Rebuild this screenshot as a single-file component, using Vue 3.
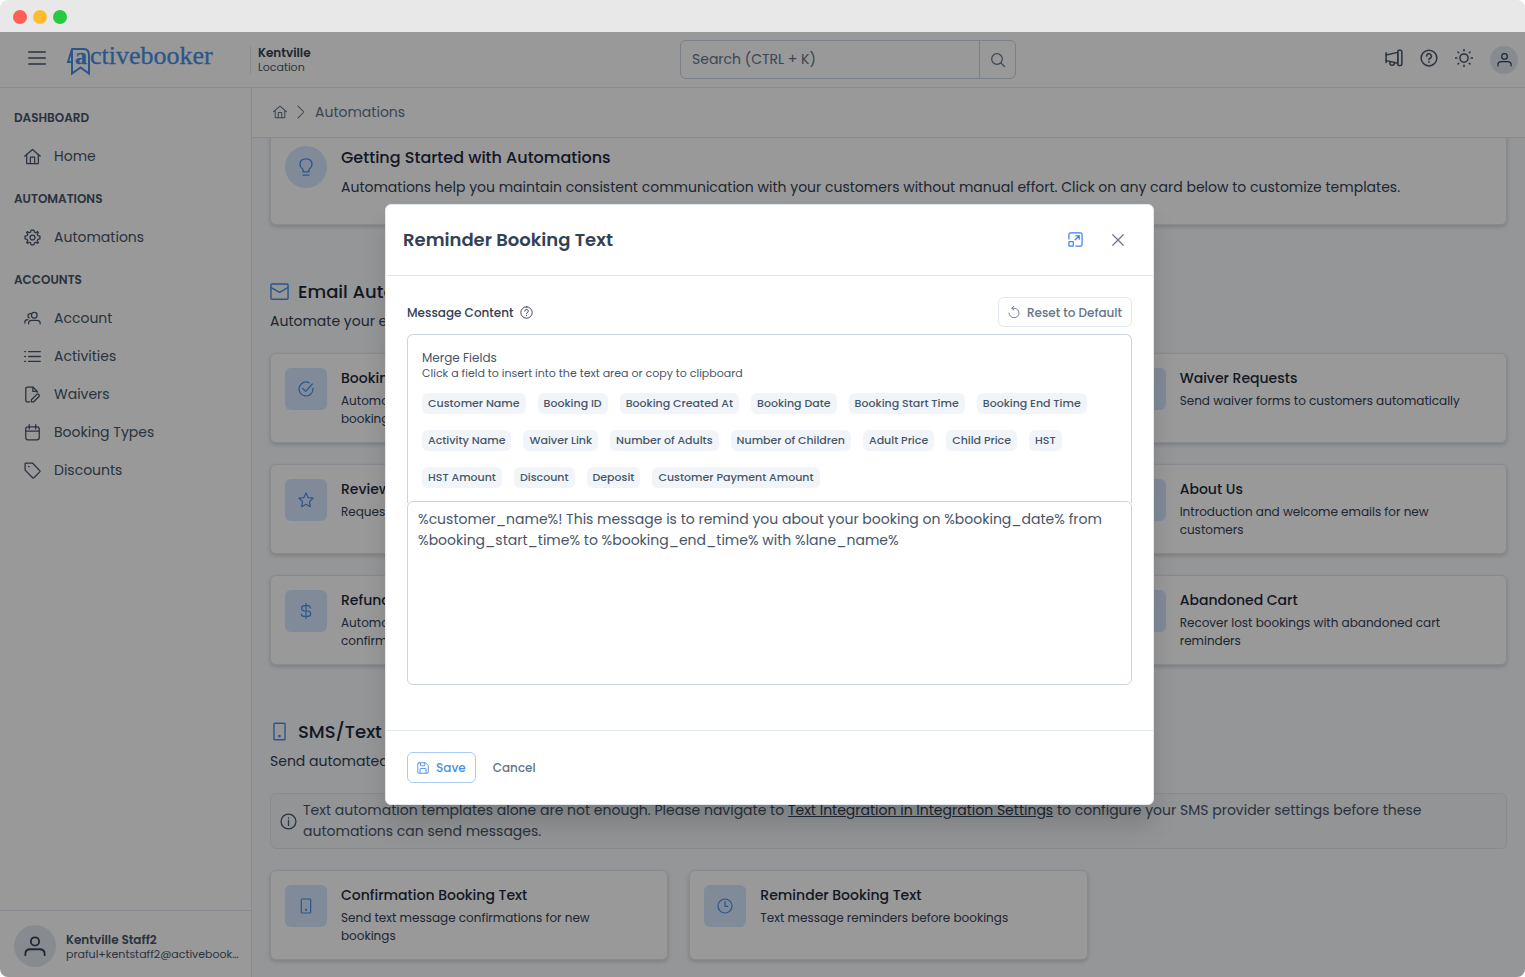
<template>
  <div class="window">
    <div class="titlebar">
      <span class="dot red"></span>
      <span class="dot yellow"></span>
      <span class="dot green"></span>
    </div>

    <div class="app">
      <header class="topbar">
        <button class="icon-btn menu-btn" type="button" aria-label="Toggle menu">
          <Icon name="bars" />
        </button>
        <a class="logo" href="#" aria-label="activebooker">
          <svg width="150" height="34" viewBox="0 0 150 34">
            <path d="M4.500 6H17Q22 6 22 12.500V30.500L13.500 24.500L5 30.500V6L1 19H5" />
            <text class="logo-a" x="8" y="21">a</text>
            <text x="23" y="21">ctivebooker</text>
          </svg>
        </a>
        <div class="location">
          <strong>Kentville</strong>
          <span>Location</span>
        </div>
        <form class="search" @submit.prevent>
          <input v-model="query" type="text" placeholder="Search (CTRL + K)" aria-label="Search" />
          <button type="submit" aria-label="Search"><Icon name="search" /></button>
        </form>
        <div class="actions">
          <button class="icon-btn" type="button" aria-label="Announcements"><Icon name="megaphone" /></button>
          <button class="icon-btn" type="button" aria-label="Help"><Icon name="help" /></button>
          <button class="icon-btn" type="button" aria-label="Toggle theme"><Icon name="sun" /></button>
          <button class="avatar small" type="button" aria-label="Profile"><Icon name="user" /></button>
        </div>
      </header>

      <div class="layout">
        <aside class="sidebar">
          <nav>
            <div v-for="group in menu" :key="group.label" class="menu-group">
              <div class="menu-label">{{ group.label }}</div>
              <a v-for="item in group.items" :key="item.label" href="#" class="menu-item">
                <Icon :name="item.icon" />
                <span>{{ item.label }}</span>
              </a>
            </div>
          </nav>
          <div class="account">
            <div class="avatar"><Icon name="user" /></div>
            <div class="account-text">
              <strong>Kentville Staff2</strong>
              <span>praful+kentstaff2@activebooker.com</span>
            </div>
          </div>
        </aside>

        <main class="main">
          <nav class="breadcrumb" aria-label="Breadcrumb">
            <a href="#" aria-label="Home"><Icon name="home" /></a>
            <Icon name="chevron" />
            <span>Automations</span>
          </nav>

          <div class="scroll">
            <div class="content">
              <section class="intro">
                <div class="card-icon round"><Icon name="bulb" /></div>
                <div>
                  <h2>Getting Started with Automations</h2>
                  <p>
                    Automations help you maintain consistent communication with your customers without
                    manual effort. Click on any card below to customize templates.
                  </p>
                </div>
              </section>

              <section class="section">
                <h1><Icon name="mail" />Email Automations</h1>
                <p class="lead">Automate your email communication</p>
                <div class="cards">
                  <a
                    v-for="card in emailCards"
                    :key="card.title"
                    href="#"
                    :class="['card', { last: card.last }]"
                  >
                    <span class="card-icon"><Icon :name="card.icon" /></span>
                    <span class="card-text">
                      <strong>{{ card.title }}</strong>
                      <span>{{ card.text }}</span>
                    </span>
                  </a>
                </div>
              </section>

              <section class="section">
                <h1><Icon name="mobile" />SMS/Text Automations</h1>
                <p class="lead">Send automated text messages</p>
                <div class="notice">
                  <Icon name="info" />
                  <p>
                    Text automation templates alone are not enough. Please navigate to
                    <a href="#">Text Integration in Integration Settings</a> to configure your SMS
                    provider settings before these automations can send messages.
                  </p>
                </div>
                <div class="cards">
                  <a v-for="card in smsCards" :key="card.title" href="#" class="card">
                    <span class="card-icon"><Icon :name="card.icon" /></span>
                    <span class="card-text">
                      <strong>{{ card.title }}</strong>
                      <span>{{ card.text }}</span>
                    </span>
                  </a>
                </div>
              </section>
            </div>
          </div>
        </main>
      </div>

      <div class="mask">
        <div class="dialog" role="dialog" aria-modal="true" aria-labelledby="dialog-title">
          <div class="dialog-header">
            <h2 id="dialog-title">Reminder Booking Text</h2>
            <button class="icon-btn expand" type="button" aria-label="Maximize"><Icon name="expand" /></button>
            <button class="icon-btn close" type="button" aria-label="Close"><Icon name="close" /></button>
          </div>

          <div class="dialog-body">
            <div class="field-head">
              <label for="message">Message Content</label>
              <Icon name="help" />
              <button class="btn reset" type="button" @click="reset"><Icon name="undo" />Reset to Default</button>
            </div>
            <div class="merge">
              <div class="merge-title">Merge Fields</div>
              <div class="merge-hint">Click a field to insert into the text area or copy to clipboard</div>
              <div class="chips">
                <button v-for="field in fields" :key="field" class="chip" type="button" @click="insert(field)">
                  {{ field }}
                </button>
              </div>
            </div>
            <textarea id="message" v-model="message" spellcheck="false"></textarea>
          </div>

          <div class="dialog-footer">
            <button class="btn save" type="button"><Icon name="save" />Save</button>
            <button class="btn cancel" type="button">Cancel</button>
          </div>
        </div>
      </div>
    </div>
  </div>
</template>

<script setup>
import { h, ref } from 'vue'

// 24x24 outlines
const icons = {
  bars: ['M1 4H23', 'M1 12H23', 'M1 20H23'],
  search: ['M10.5 2.500a8 8 0 1 0 0 16a8 8 0 1 0 0-16z', 'M16.500 16.500L22 22'],
  megaphone: ['M1.500 5V18', 'M1.500 8L17 4.500V19L1.500 15.500', 'M17 3.500Q17 1.500 18.500 1.500H20.500Q22.500 1.500 22.500 3.500V20Q22.500 22 20.500 22H18.500Q17 22 17 20Z', 'M6.500 17V18.500Q6.500 21.500 9.500 21.500T12.500 18.500V18'],
  help: ['M12 1.500a10.500 10.500 0 1 0 0 21a10.500 10.500 0 1 0 0-21z', 'M8.800 9.500a3.200 3.200 0 1 1 4.600 2.900Q12 13 12 14.200', 'M12 17V17.800'],
  sun: ['M12 6.500a5.500 5.500 0 1 0 0 11a5.500 5.500 0 1 0 0-11z', 'M12 .500V2.500M12 21.500V23.500M.500 12H2.500M21.500 12H23.500M4 4L5 5M19 19L20 20M4 20L5 19M19 5L20 4'],
  user: ['M12 2.500a4.500 4.500 0 1 0 0 9a4.500 4.500 0 1 0 0-9z', 'M1.500 22V20.500Q1.500 15.500 7 15.500H17Q22.500 15.500 22.500 20.500V22'],
  home: ['M1 11.500L12 2L23 11.500', 'M3.800 9.500V22H20.200V9.500', 'M9 22V13H15V22'],
  cog: ['M12 8.500a3.500 3.500 0 1 0 0 7a3.500 3.500 0 1 0 0-7z', 'M10 1.500H14L14.700 4.500L16.600 5.300L19.200 3.700L20.300 4.800L18.700 7.400L19.500 9.300L22.500 10V14L19.500 14.700L18.700 16.600L20.300 19.200L19.200 20.300L16.600 18.700L14.700 19.500L14 22.500H10L9.300 19.500L7.400 18.700L4.800 20.300L3.700 19.200L5.300 16.600L4.500 14.700L1.500 14V10L4.500 9.300L5.300 7.400L3.700 4.800L4.800 3.700L7.400 5.300L9.300 4.500Z'],
  users: ['M14.500 3.500a4 4 0 1 0 0 8a4 4 0 1 0 0-8z', 'M6.500 19.500V18.500Q6.500 14.500 11 14.500H18Q22.800 14.500 22.800 18.500V19.500', 'M9.500 5.200Q7.800 4.800 6.500 6T5.600 9T7.500 11.300', 'M1.200 18.500V17Q1.200 13.500 5.500 13.500'],
  list: ['M6.500 5H23M6.500 12H23M6.500 19H23', 'M1 5H2.200M1 12H2.200M1 19H2.200'],
  fileEdit: ['M8 22.500H5Q2.500 22.500 2.500 20V4Q2.500 1.500 5 1.500H12.500L18.500 7.500V9', 'M12.500 1.500V7.500H18.500', 'M10.500 22.500V19.500L18.500 11.500Q19.500 10.500 20.700 11.700T21.500 14.500L13.500 22.500Z'],
  calendar: ['M5.500 4H18.500Q21.500 4 21.500 7V19.500Q21.500 22.500 18.500 22.500H5.500Q2.500 22.500 2.500 19.500V7Q2.500 4 5.500 4Z', 'M2.500 10H21.500M7.500 1V7M16.500 1V7'],
  tag: ['M1.500 2.500V11.500L12.500 22.500Q13.200 23 14 22.300L22.300 14Q23 13.200 22.500 12.500L12 1.500H2.500Q1.500 1.500 1.500 2.500Z', 'M6.500 6.500H7.300'],
  chevron: ['M7 2L17 12L7 22'],
  bulb: ['M8 18.500V16Q8 14.800 7 14Q4 12 4 8.500Q4 1.200 12 1.200T20 8.500Q20 12 17 14Q16 14.800 16 16V18.500Z', 'M8 22.800H16'],
  mail: ['M2.500 2.500H21.500Q22.800 2.500 22.800 3.800V20.500Q22.800 21.800 21.500 21.800H2.500Q1.200 21.800 1.200 20.500V3.800Q1.200 2.500 2.500 2.500Z', 'M1.500 7L12 13L22.500 7'],
  mobile: ['M6 1.500H18Q19 1.500 19 2.500V21.500Q19 22.500 18 22.500H6Q5 22.500 5 21.500V2.500Q5 1.500 6 1.500Z', 'M12 17a.800 .800 0 1 0 0 1.600a.800 .800 0 1 0 0-1.600z'],
  info: ['M12 1.500a10.500 10.500 0 1 0 0 21a10.500 10.500 0 1 0 0-21z', 'M12 10.500V17.500M12 7V7.500'],
  check: ['M22.500 10.500V12A10.500 10.500 0 1 1 16.500 2.500', 'M7 11L11.500 15.500L21.500 4.500'],
  star: ['M12 1.500L15.200 8.300L22.500 9.300L17.200 14.500L18.500 22L12 18.500L5.500 22L6.800 14.500L1.500 9.300L8.800 8.300Z'],
  dollar: ['M12 .500V23.500', 'M18.500 7.500Q18.500 4 14.500 4H10Q5.500 4 5.500 8T10 12H14.500Q19 12 19 16T14.500 20H9.500Q5 20 5 16.500'],
  clock: ['M12 1.500a10.500 10.500 0 1 0 0 21a10.500 10.500 0 1 0 0-21z', 'M12 5.500V12.500H16'],
  expand: ['M1.500 11V4Q1.500 1.500 4 1.500H20Q22.500 1.500 22.500 4V20Q22.500 22.500 20 22.500H12.500', 'M2.500 15.500H7.500Q8.500 15.500 8.500 16.500V21.500Q8.500 22.500 7.500 22.500H2.500Q1.500 22.500 1.500 21.500V16.500Q1.500 15.500 2.500 15.500Z', 'M11.500 12.500L18 6M12.500 6H18V11.500'],
  close: ['M3 3L21 21M21 3L3 21'],
  undo: ['M2 14a10 9.500 0 1 0 10-9.500H8', 'M12 .500L7.500 4.500L12 8.500'],
  save: ['M4 1.500H17L22.500 7V20Q22.500 22.500 20 22.500H4Q1.500 22.500 1.500 20V4Q1.500 1.500 4 1.500Z', 'M6 22V14Q6 13 7 13H17Q18 13 18 14V22', 'M7 2V7.500H15.500V2']
}

const Icon = (props) =>
  h(
    'svg',
    { class: 'icon', viewBox: '0 0 24 24', 'aria-hidden': 'true' },
    icons[props.name].map((d) => h('path', { d }))
  )
Icon.props = ['name']

const menu = [
  { label: 'DASHBOARD', items: [{ label: 'Home', icon: 'home' }] },
  { label: 'AUTOMATIONS', items: [{ label: 'Automations', icon: 'cog' }] },
  {
    label: 'ACCOUNTS',
    items: [
      { label: 'Account', icon: 'users' },
      { label: 'Activities', icon: 'list' },
      { label: 'Waivers', icon: 'fileEdit' },
      { label: 'Booking Types', icon: 'calendar' },
      { label: 'Discounts', icon: 'tag' }
    ]
  }
]

const emailCards = [
  { title: 'Booking Confirmation', text: 'Automatically send confirmations for new bookings', icon: 'check' },
  { title: 'Waiver Requests', text: 'Send waiver forms to customers automatically', icon: 'fileEdit', last: true },
  { title: 'Review Requests', text: 'Request reviews from customers', icon: 'star' },
  { title: 'About Us', text: 'Introduction and welcome emails for new customers', icon: 'info', last: true },
  { title: 'Refund Confirmation', text: 'Automatically send customers their refund confirmations', icon: 'dollar' },
  { title: 'Abandoned Cart', text: 'Recover lost bookings with abandoned cart reminders', icon: 'tag', last: true }
]

const smsCards = [
  { title: 'Confirmation Booking Text', text: 'Send text message confirmations for new bookings', icon: 'mobile' },
  { title: 'Reminder Booking Text', text: 'Text message reminders before bookings', icon: 'clock' }
]

const fields = [
  'Customer Name',
  'Booking ID',
  'Booking Created At',
  'Booking Date',
  'Booking Start Time',
  'Booking End Time',
  'Activity Name',
  'Waiver Link',
  'Number of Adults',
  'Number of Children',
  'Adult Price',
  'Child Price',
  'HST',
  'HST Amount',
  'Discount',
  'Deposit',
  'Customer Payment Amount'
]

const defaultMessage =
  '%customer_name%! This message is to remind you about your booking on %booking_date% from %booking_start_time% to %booking_end_time% with %lane_name%'

const query = ref('')
const message = ref(defaultMessage)

const reset = () => {
  message.value = defaultMessage
}

const insert = (field) => {
  message.value += ` %${field.toLowerCase().replace(/ /g, '_')}%`
}
</script>

<style>
body {
  margin: 0;
  background: #fff;
}
</style>

<style scoped>
* {
  box-sizing: border-box;
}

.window {
  height: 100vh;
  display: flex;
  flex-direction: column;
  overflow: hidden;
  border-radius: 8px;
  font-family: Poppins, Inter, "Liberation Sans", sans-serif;
  font-size: 14px;
  line-height: 21px;
  color: #475569;
}

button,
input,
textarea {
  font: inherit;
  color: inherit;
}

button {
  padding: 0;
  border: 0;
  background: none;
  cursor: pointer;
}

a {
  color: inherit;
  text-decoration: none;
}

h1,
h2,
p {
  margin: 0;
}

.icon {
  flex: none;
  display: block;
  width: 17px;
  height: 17px;
}

.icon :deep(path) {
  fill: none;
  stroke: currentColor;
  stroke-width: 1.8;
  stroke-linecap: round;
  stroke-linejoin: round;
}

.titlebar {
  flex: none;
  height: 32px;
  padding: 2px 13px 0;
  display: flex;
  align-items: center;
  gap: 6px;
  background: #e8e8e8;
}

.dot {
  width: 14px;
  height: 14px;
  border-radius: 50%;
}

.dot.red { background: #ff5f57; }
.dot.yellow { background: #febc2e; }
.dot.green { background: #28c840; }

.app {
  position: relative;
  flex: 1;
  min-height: 0;
  display: flex;
  flex-direction: column;
  background: #fff;
}

.topbar {
  flex: none;
  height: 56px;
  padding: 0 7px 0 28px;
  display: flex;
  align-items: center;
  border-bottom: 1px solid #e2e8f0;
}

.topbar .icon-btn {
  padding-bottom: 3px;
}

.topbar .icon-btn .icon {
  width: 18px;
  height: 18px;
}

.topbar .icon-btn .icon :deep(path) {
  stroke-width: 2;
}

.logo {
  margin-left: 21px;
}

.logo svg {
  display: block;
  overflow: visible;
}

.logo path {
  fill: none;
  stroke: #4a8fe7;
  stroke-width: 2;
}

.logo text {
  font-family: "Liberation Serif", serif;
  font-size: 26px;
  fill: #4a8fe7;
  stroke: #4a8fe7;
  stroke-width: 0.3px;
}

.logo .logo-a {
  font-weight: 700;
  font-size: 24px;
}

.location {
  margin-left: 33px;
  padding-left: 7px;
  display: flex;
  flex-direction: column;
  border-left: 1px solid #e2e8f0;
  font-size: 11px;
  line-height: 14px;
}

.location strong {
  font-size: 12px;
  font-weight: 600;
  color: #334155;
}

.search {
  width: 336px;
  height: 39px;
  margin-left: auto;
  display: flex;
  border: 1px solid #cbd5e1;
  border-radius: 6px;
}

.search input {
  flex: 1;
  min-width: 0;
  padding: 0 11px;
  border: 0;
  outline: 0;
  background: none;
}

.search input::placeholder {
  color: #64748b;
  opacity: 1;
}

.search button {
  width: 36px;
  display: flex;
  align-items: center;
  justify-content: center;
  border-left: 1px solid #cbd5e1;
  color: #64748b;
}

.search .icon {
  width: 16px;
  height: 16px;
}

.actions {
  flex: 0 0 134px;
  margin-left: 368px;
  display: flex;
  align-items: center;
  justify-content: flex-end;
  gap: 17px;
}

.avatar {
  flex: none;
  width: 42px;
  height: 42px;
  display: flex;
  align-items: center;
  justify-content: center;
  border-radius: 50%;
  background: #e2e8f0;
  color: #334155;
}

.avatar .icon {
  width: 22px;
  height: 22px;
}

.avatar .icon :deep(path) {
  stroke-width: 2;
}

.avatar.small {
  width: 28px;
  height: 28px;
}

.avatar.small .icon {
  width: 15px;
  height: 15px;
}

.layout {
  flex: 1;
  min-height: 0;
  display: flex;
}

.sidebar {
  flex: none;
  width: 252px;
  display: flex;
  flex-direction: column;
  justify-content: space-between;
  border-right: 1px solid #e2e8f0;
}

.sidebar nav {
  padding: 11px 14px;
  display: flex;
  flex-direction: column;
  gap: 5px;
}

.menu-group {
  display: flex;
  flex-direction: column;
}

.menu-label {
  font-size: 12px;
  font-weight: 600;
  line-height: 38px;
}

.menu-item {
  padding: 9px 10px;
  display: flex;
  align-items: center;
  gap: 13px;
  line-height: 20px;
}

.account {
  padding: 14px 7px 10px 14px;
  display: flex;
  align-items: center;
  gap: 10px;
  border-top: 1px solid #e2e8f0;
}

.account-text {
  flex: 1;
  min-width: 0;
  display: flex;
  flex-direction: column;
  font-size: 11px;
  line-height: 14px;
}

.account-text strong {
  font-size: 12px;
  font-weight: 600;
  line-height: 15px;
}

.account-text span {
  overflow: hidden;
  text-overflow: ellipsis;
  white-space: nowrap;
}

.main {
  flex: 1;
  min-width: 0;
  display: flex;
  flex-direction: column;
}

.breadcrumb {
  flex: none;
  height: 50px;
  padding: 0 21px 1px;
  display: flex;
  align-items: center;
  gap: 7px;
  border-bottom: 1px solid #e2e8f0;
  color: #64748b;
}

.breadcrumb .icon {
  width: 14px;
  height: 14px;
}

.scroll {
  flex: 1;
  min-height: 0;
  overflow: hidden;
  background: #f8fafc;
}

.content {
  margin-top: -7px;
  padding: 0 18px 17px;
}

.intro {
  padding: 14px;
  min-height: 94px;
  display: flex;
  gap: 14px;
  border: 1px solid #e2e8f0;
  border-radius: 6px;
  background: #fff;
  box-shadow: 0 2px 4px rgba(0, 0, 0, 0.16);
  color: #334155;
}

.intro h2 {
  font-size: 16px;
  font-weight: 500;
  line-height: 24px;
  margin-bottom: 7px;
  color: #1e293b;
}

.section {
  padding-top: 53px;
}

.section h1 {
  display: flex;
  align-items: center;
  gap: 9px;
  font-size: 18px;
  font-weight: 500;
  line-height: 27px;
  color: #1e293b;
}

.section h1 .icon {
  width: 19px;
  height: 19px;
  color: #4a8fe7;
}

.lead {
  margin: 6px 0 21px;
  color: #334155;
}

.cards {
  display: grid;
  grid-template-columns: repeat(3, 1fr);
  gap: 21px;
}

.card {
  padding: 14px;
  display: flex;
  gap: 14px;
  border: 1px solid #e2e8f0;
  border-radius: 6px;
  background: #fff;
  box-shadow: 0 2px 4px rgba(0, 0, 0, 0.16);
}

.card.last {
  grid-column: 3;
}

.card-icon {
  flex: none;
  width: 42px;
  height: 42px;
  display: flex;
  align-items: center;
  justify-content: center;
  border-radius: 6px;
  background: #d6e6ff;
  color: #4a8fe7;
}

.card-icon .icon {
  width: 16px;
  height: 16px;
}

.card-icon.round {
  border-radius: 50%;
}

.card-icon.round .icon {
  width: 18px;
  height: 18px;
}

.card-text {
  display: flex;
  flex-direction: column;
  gap: 3px;
  min-height: 60px;
  padding-right: 14px;
  font-size: 12px;
  line-height: 18px;
  color: #334155;
}

.card-text strong {
  font-size: 14px;
  font-weight: 500;
  line-height: 21px;
  color: #1e293b;
}

.notice {
  margin-bottom: 21px;
  padding: 6px 9px;
  display: flex;
  align-items: center;
  gap: 6px;
  border: 1px solid #e2e8f0;
  border-radius: 6px;
  background: #f4f7fb;
}

.notice a {
  text-decoration: underline;
  color: #334155;
}

.mask {
  position: absolute;
  inset: 0;
  padding-left: 14px;
  display: flex;
  align-items: center;
  justify-content: center;
  background: rgba(0, 0, 0, 0.4);
}

.dialog {
  width: min(769px, 92%);
  border: 1px solid #e2e8f0;
  border-radius: 6px;
  background: #fff;
  box-shadow: 0 20px 25px rgba(0, 0, 0, 0.14);
}

.dialog-header {
  height: 71px;
  padding: 0 28px 1px 17px;
  display: flex;
  align-items: center;
  gap: 28px;
  border-bottom: 1px solid #e2e8f0;
}

.dialog-header h2 {
  flex: 1;
  font-size: 18px;
  font-weight: 600;
  color: #334155;
}

.dialog-header .icon {
  width: 14px;
  height: 14px;
}

.dialog-header .icon :deep(path) {
  stroke-width: 2;
}

.dialog-header .expand {
  color: #3b82f6;
}

.dialog-header .expand .icon {
  width: 15px;
  height: 15px;
}

.dialog-header .close {
  color: #64748b;
}

.dialog-body {
  padding: 21px 21px 45px;
  display: flex;
  flex-direction: column;
}

.field-head {
  margin-bottom: 7px;
  display: flex;
  align-items: center;
  gap: 7px;
  font-size: 12px;
  font-weight: 500;
  color: #334155;
}

.field-head > .icon {
  width: 13px;
  height: 13px;
}

.btn {
  height: 30px;
  padding: 0 9px;
  display: flex;
  align-items: center;
  gap: 7px;
  border: 1px solid transparent;
  border-radius: 6px;
  font-size: 12px;
  font-weight: 500;
  color: #64748b;
}

.btn .icon {
  width: 12px;
  height: 12px;
}

.reset {
  margin-left: auto;
  border-color: #e2e8f0;
}

.merge {
  padding: 15px 14px;
  border: 1px solid #cbd5e1;
  border-bottom: 0;
  border-radius: 6px 6px 0 0;
}

.merge-title {
  font-size: 12px;
  line-height: 16px;
}

.merge-hint {
  margin-bottom: 12px;
  font-size: 11px;
  line-height: 15px;
}

.chips {
  display: flex;
  flex-wrap: wrap;
  gap: 16px 12px;
}

.chip {
  padding: 0 6px;
  border-radius: 6px;
  background: #f1f5f9;
  font-size: 11px;
  font-weight: 500;
  line-height: 21px;
}

textarea {
  display: block;
  width: 100%;
  height: 184px;
  margin: -2px 0 0;
  padding: 7px 10px;
  border: 1px solid #cbd5e1;
  border-radius: 6px;
  outline: 0;
  resize: none;
  background: #fff;
}

.dialog-footer {
  padding: 21px;
  display: flex;
  gap: 7px;
  border-top: 1px solid #e2e8f0;
}

.dialog-footer .btn {
  height: 31px;
}

.save {
  border-color: #a9cbf8;
  color: #4a8fe7;
}
</style>
